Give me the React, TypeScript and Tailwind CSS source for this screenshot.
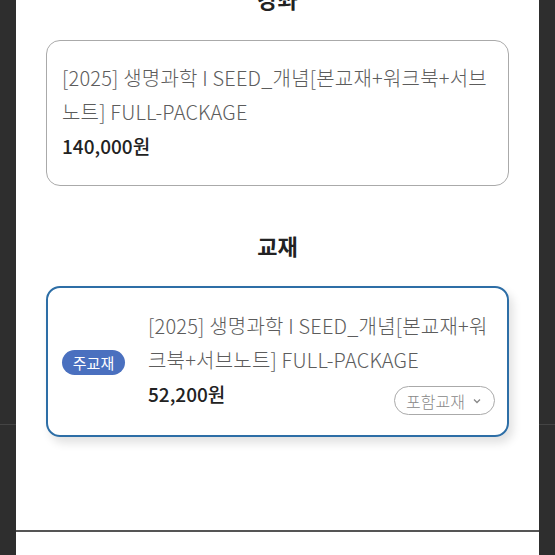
export default function App() {
  const title = "[2025] 생명과학 I SEED_개념[본교재+워크북+서브노트] FULL-PACKAGE"

  return (
    <div
      className="flex h-[555px] w-[555px] overflow-hidden bg-[#2e2e2e]"
      style={{ fontFamily: '"Noto Sans CJK KR", "Noto Sans", sans-serif' }}
    >
      <div className="w-[16px] shrink-0">
        <div className="h-[425px] border-b border-[#444]" />
      </div>

      <div className="flex flex-1 flex-col bg-white">
        <div className="px-[30px]">
          {/* 강좌 */}
          <h2 className="mt-[-18px] text-center text-[22px] font-bold leading-[32px] text-[#222]">강좌</h2>
          <div className="mt-[26px] rounded-[14px] border border-[#aaa] pl-[15px] pr-[16px] pt-[20px] pb-[22px]">
            <p className="text-[20px] font-light leading-[34px] tracking-[0.2px] text-[#5c5c5c]">{title}</p>
            <p className="text-[19px] font-medium leading-[34px] text-[#222]">140,000원</p>
          </div>

          {/* 교재 */}
          <h2 className="mt-[43px] text-center text-[22px] font-bold leading-[32px] text-[#222]">교재</h2>
          <div className="mt-[25px] flex items-center rounded-[14px] border-[2.5px] border-[#2d6ea6] pl-[14px] pr-[12px] pt-[21px] pb-[20px] shadow-[4px_6px_10px_rgba(0,0,0,0.12)]">
            <span className="w-[63px] shrink-0 rounded-full bg-[#4a70bf] py-[1px] text-center text-[15px] leading-[23px] text-white">
              주교재
            </span>
            <div className="ml-[23px] flex-1">
              <p className="text-[20px] font-light leading-[34px] tracking-[0.2px] text-[#5c5c5c]">{title}</p>
              <div className="flex items-start justify-between">
                <p className="text-[19px] font-medium leading-[34px] text-[#222]">52,200원</p>
                <button className="mt-[9px] flex h-[29px] items-center gap-[7px] rounded-full border border-[#aaa] pl-[11px] pr-[12px] text-[16px] font-light text-[#888]">
                  포함교재
                  <svg width="10" height="10" viewBox="0 0 10 10" fill="none" stroke="#888" strokeWidth="1.3">
                    <path d="M2 3.5l3 3 3-3" />
                  </svg>
                </button>
              </div>
            </div>
          </div>
        </div>

        <div className="flex-1" />
        <div className="h-[25px] border-t-2 border-[#555]" />
      </div>

      <div className="w-[16px] shrink-0">
        <div className="h-[425px] border-b border-[#444]" />
      </div>
    </div>
  )
}
